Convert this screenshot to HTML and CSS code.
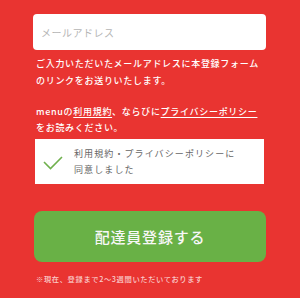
FILE: index.html
```html
<!DOCTYPE html>
<html>

<head>
    <title>配達員登録</title>
    <link rel="stylesheet" href="styles.css">
</head>

<body>
    <div class="container">
        <form class="signup">
            <input class="email" type="email" placeholder="メールアドレス">
            <p class="note">ご入力いただいたメールアドレスに本登録フォーム<br>のリンクをお送りいたします。</p>
            <p class="note terms">menuの<a href="#">利用規約</a>、ならびに<a href="#">プライバシーポリシー</a><br>をお読みください。</p>
            <label class="agree">
                <svg class="check" width="20" height="16" viewBox="0 0 20 16">
                    <path d="M1 7 L7.5 13.5 L19 2" fill="none" stroke="#6fb04d" stroke-width="1.6"/>
                </svg>
                <span>利用規約・プライバシーポリシーに<br>同意しました</span>
            </label>
            <button class="submit" type="button">配達員登録する</button>
            <p class="small">※現在、登録まで2～3週間いただいております</p>
        </form>
    </div>
</body>

</html>
```

FILE: styles.css
```css
body {
    margin: 0;
    padding: 0;
    background-color: #e93431;
    font-family: "Noto Sans CJK JP", "Noto Sans", sans-serif;
}

.container {
    width: 300px;
    height: 298px;
    overflow: hidden;
}

.signup {
    display: flex;
    flex-direction: column;
    padding: 14px 34px 0 33px;
}

.email {
    box-sizing: border-box;
    flex: none;
    width: 233px;
    height: 36px;
    border: none;
    border-radius: 4px;
    background-color: #fff;
    padding: 0 8px;
    font-family: inherit;
    font-size: 10px;
    letter-spacing: 0.5px;
    outline: none;
}

.email::placeholder {
    color: #b5b5b5;
}

.note {
    margin: 5px 0 0 3px;
    color: #fff;
    font-size: 9px;
    font-weight: 500;
    letter-spacing: 0.7px;
    line-height: 17px;
}

.terms {
    margin-top: 15px;
    line-height: 16px;
}

.terms a {
    color: #fff;
    text-decoration: underline;
    text-decoration-thickness: 1px;
    text-underline-offset: 2px;
}

.agree {
    box-sizing: border-box;
    flex: none;
    display: flex;
    align-items: center;
    margin: 3px 0 0 2px;
    width: 229px;
    height: 45px;
    background-color: #fff;
    padding: 0 0 0 8px;
    color: #666;
    font-size: 9px;
    letter-spacing: 1.1px;
    line-height: 16px;
}

.check {
    flex: none;
    margin: 3px 11px 0 0;
}

.submit {
    flex: none;
    margin: 27px 0 0 1px;
    width: 232px;
    height: 51px;
    border: none;
    border-radius: 8px;
    background-color: #69b146;
    color: #f7f7f7;
    font-family: inherit;
    font-size: 15px;
    font-weight: 500;
    letter-spacing: 0.8px;
}

.small {
    margin: 11px 0 0 3px;
    color: rgba(255, 255, 255, 0.75);
    font-size: 7.3px;
    font-weight: 500;
    letter-spacing: 0.6px;
    line-height: 12px;
}
```
